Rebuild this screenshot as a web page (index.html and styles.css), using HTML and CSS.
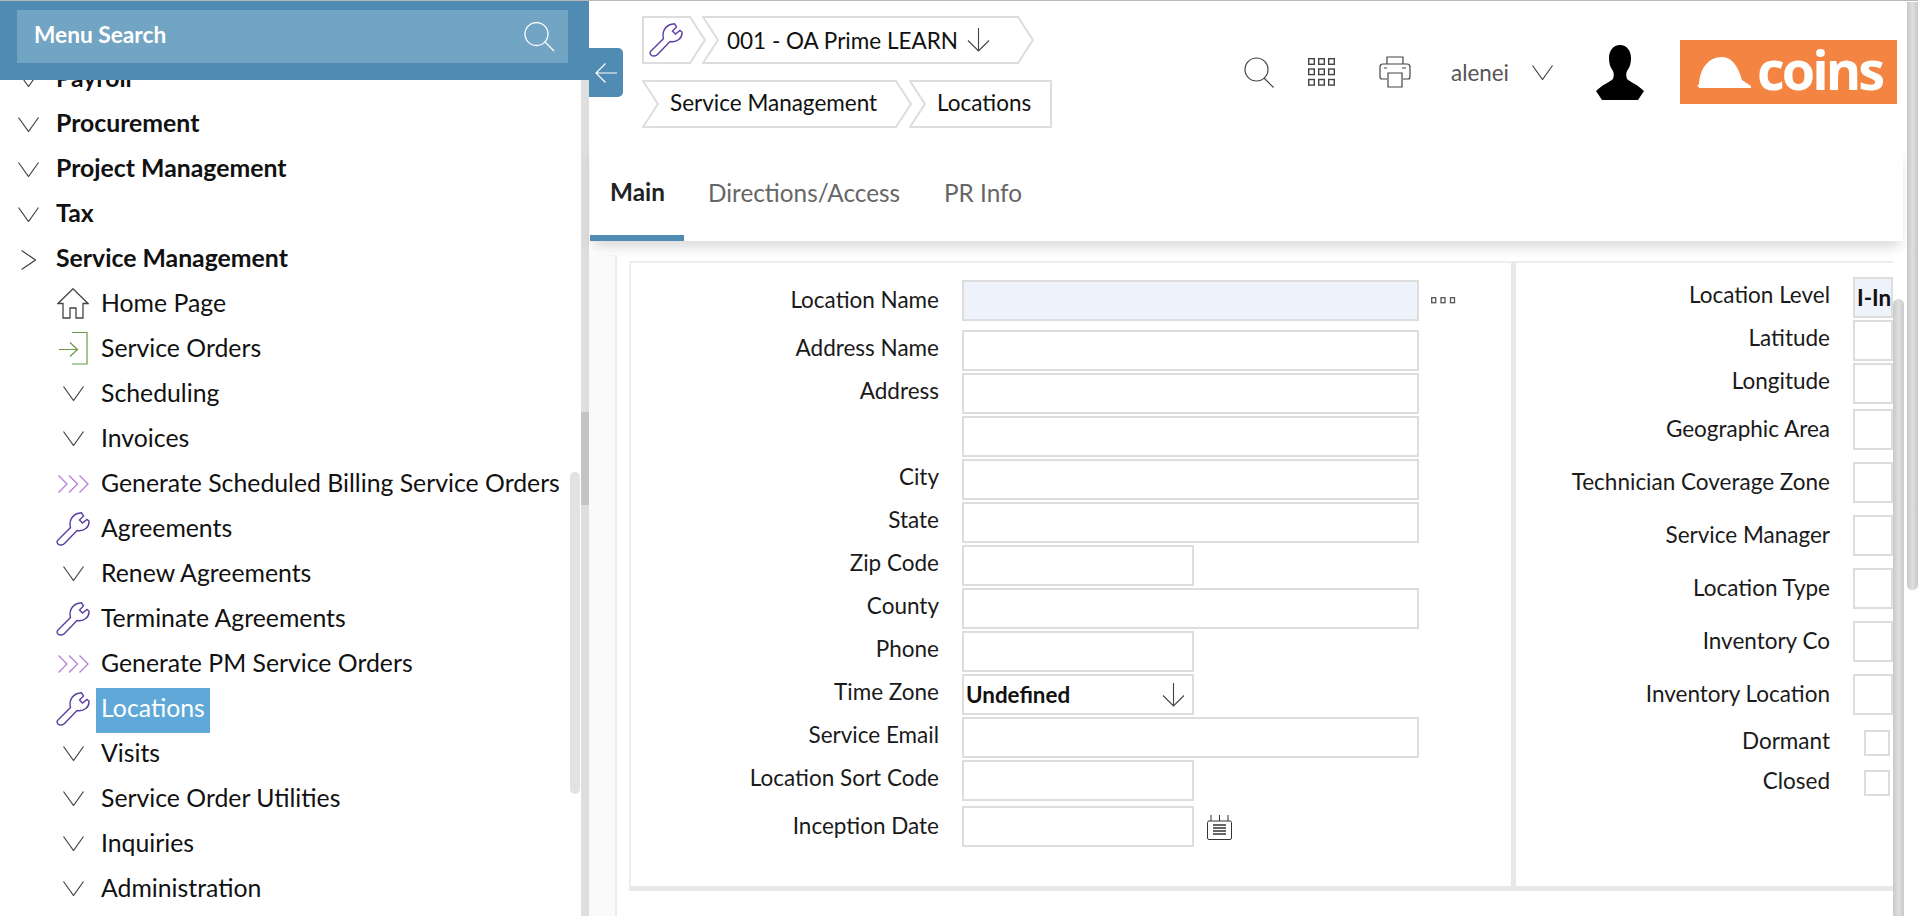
FILE: index.html
```html
<!DOCTYPE html>
<html lang="en">
<head>
    <meta charset="UTF-8">
    <title>Locations</title>
    <link rel="stylesheet" href="styles.css">
</head>
<body>

<svg class="icon-defs" width="0" height="0">
    <symbol id="i-down" viewBox="0 0 21 15"><path d="M.5.5 10.5 14.5 20.5.5" fill="none" stroke="#444" stroke-width="1.2"/></symbol>
    <symbol id="i-right" viewBox="0 0 15 20"><path d="M.5.5 14.5 10 .5 19.5" fill="none" stroke="#444" stroke-width="1.2"/></symbol>
    <symbol id="i-wrench" viewBox="0 0 34 34"><path d="M2.5 27.5 14.5 15.5C13 10 15 4 21.5 1.5L25.5.8 27.5 4 23.5 8 26.5 11 31 7.5 33 9C33.5 15 28 20 21 18.5L8.5 31.5C6.5 33.5 3.5 33.5 2 32 .5 30.5.8 29 2.5 27.5Z" fill="none" stroke="#5b3fa3" stroke-width="1.4"/></symbol>
    <symbol id="i-run" viewBox="0 0 31 18"><path d="M.5.5 9 9 .5 17.5M11 .5 19.5 9 11 17.5M21.500 .5 30 9 21.500 17.500" fill="none" stroke="#b67ddb" stroke-width="1.3"/></symbol>
    <symbol id="i-arrow-down" viewBox="0 0 23 24"><path d="M11.500 0V23M1 12.500 11.500 23 22 12.500" fill="none" stroke="#444" stroke-width="1.1"/></symbol>
</svg>

<div class="app">
    <aside class="sidebar">
        <div class="menu-search">
            <div class="search-box">
                <span class="search-txt">Menu Search</span>
                <svg width="31" height="30" viewBox="0 0 31 30"><circle cx="12.500" cy="12" r="11.500" fill="none" stroke="#fff" stroke-width="1.300"/><path d="M21 20 30 29" stroke="#fff" stroke-width="1.300"/></svg>
            </div>
        </div>
        <div class="menu-body">
            <ul class="menu">
                <li class="item top"><svg class="ico-down"><use href="#i-down"/></svg><span class="top-txt">Payroll</span></li>
                <li class="item top"><svg class="ico-down"><use href="#i-down"/></svg><span class="top-txt">Procurement</span></li>
                <li class="item top"><svg class="ico-down"><use href="#i-down"/></svg><span class="top-txt">Project Management</span></li>
                <li class="item top"><svg class="ico-down"><use href="#i-down"/></svg><span class="top-txt">Tax</span></li>
                <li class="item top"><svg class="ico-right"><use href="#i-right"/></svg><span class="top-txt">Service Management</span></li>
                <li class="item sub"><span class="ico"><svg width="32" height="31" viewBox="0 0 32 31"><path d="M16 .8 1 15.500H6V30H13V20H19V30H26V15.500H31Z" fill="none" stroke="#444" stroke-width="1.300"/></svg></span><span class="txt">Home Page</span></li>
                <li class="item sub"><span class="ico"><svg width="29" height="33" viewBox="0 0 29 33"><path d="M13 .5H28V32H13M0 17.500H18M11 10.500 18.500 17.500 11 24.500" fill="none" stroke="#6b9a45" stroke-width="1.200"/></svg></span><span class="txt">Service Orders</span></li>
                <li class="item sub"><span class="ico"><svg class="ico-down"><use href="#i-down"/></svg></span><span class="txt">Scheduling</span></li>
                <li class="item sub"><span class="ico"><svg class="ico-down"><use href="#i-down"/></svg></span><span class="txt">Invoices</span></li>
                <li class="item sub"><span class="ico"><svg class="ico-run"><use href="#i-run"/></svg></span><span class="txt">Generate Scheduled Billing Service Orders</span></li>
                <li class="item sub"><span class="ico"><svg class="ico-wrench"><use href="#i-wrench"/></svg></span><span class="txt">Agreements</span></li>
                <li class="item sub"><span class="ico"><svg class="ico-down"><use href="#i-down"/></svg></span><span class="txt">Renew Agreements</span></li>
                <li class="item sub"><span class="ico"><svg class="ico-wrench"><use href="#i-wrench"/></svg></span><span class="txt">Terminate Agreements</span></li>
                <li class="item sub"><span class="ico"><svg class="ico-run"><use href="#i-run"/></svg></span><span class="txt">Generate PM Service Orders</span></li>
                <li class="item sub"><span class="ico"><svg class="ico-wrench"><use href="#i-wrench"/></svg></span><span class="txt active">Locations</span></li>
                <li class="item sub"><span class="ico"><svg class="ico-down"><use href="#i-down"/></svg></span><span class="txt">Visits</span></li>
                <li class="item sub"><span class="ico"><svg class="ico-down"><use href="#i-down"/></svg></span><span class="txt">Service Order Utilities</span></li>
                <li class="item sub"><span class="ico"><svg class="ico-down"><use href="#i-down"/></svg></span><span class="txt">Inquiries</span></li>
                <li class="item sub"><span class="ico"><svg class="ico-down"><use href="#i-down"/></svg></span><span class="txt">Administration</span></li>
            </ul>
            <div class="menu-thumb"></div>
            <div class="menu-track"><div class="menu-track-thumb"></div></div>
        </div>
    </aside>

    <main class="main">
        <div class="main-col">
            <header class="topbar">
                <button class="back-btn"><svg width="22" height="20" viewBox="0 0 22 20"><path d="M22 10H1M10.500.5 1 10 10.500 19.500" fill="none" stroke="#fff" stroke-width="1.200"/></svg></button>
                <div class="crumbs">
                    <div class="crumb-row">
                        <div class="crumb crumb-tool">
                            <svg width="64" height="48"><path d="M1 1H48L63 24 48 47H1Z" fill="#fff" stroke="#ddd" stroke-width="2"/></svg>
                            <span class="crumb-txt"><svg class="ico-wrench"><use href="#i-wrench"/></svg></span>
                        </div>
                        <div class="crumb crumb-co">
                            <svg width="333" height="48"><path d="M1 1H316L331 24 316 47H1L16 24Z" fill="#fff" stroke="#ddd" stroke-width="2"/></svg>
                            <span class="crumb-txt">001 - OA Prime LEARN<svg class="crumb-arrow"><use href="#i-arrow-down"/></svg></span>
                        </div>
                    </div>
                    <div class="crumb-row row-two">
                        <div class="crumb crumb-module">
                            <svg width="271" height="48"><path d="M1 1H254L269 24 254 47H1L16 24Z" fill="#fff" stroke="#ddd" stroke-width="2"/></svg>
                            <span class="crumb-txt">Service Management</span>
                        </div>
                        <div class="crumb crumb-page">
                            <svg width="143" height="48"><path d="M1 1H142V47H1L16 24Z" fill="#fff" stroke="#ddd" stroke-width="2"/></svg>
                            <span class="crumb-txt">Locations</span>
                        </div>
                    </div>
                </div>
                <div class="tools">
                    <svg class="tool" width="30" height="31" viewBox="0 0 30 31"><circle cx="12.500" cy="12.500" r="11.500" fill="none" stroke="#444" stroke-width="1.200"/><path d="M20 21 29.500 30.500" stroke="#444" stroke-width="1.200"/></svg>
                    <svg class="tool t-grid" width="27" height="28" viewBox="0 0 27 28" fill="none" stroke="#444" stroke-width="1.400"><rect x=".7" y=".7" width="5.600" height="5.600"/><rect x="10.700" y=".7" width="5.600" height="5.600"/><rect x="20.700" y=".7" width="5.600" height="5.600"/><rect x=".7" y="11" width="5.600" height="5.600"/><rect x="10.700" y="11" width="5.600" height="5.600"/><rect x="20.700" y="11" width="5.600" height="5.600"/><rect x=".7" y="21.500" width="5.600" height="5.600"/><rect x="10.700" y="21.500" width="5.600" height="5.600"/><rect x="20.700" y="21.500" width="5.600" height="5.600"/></svg>
                    <svg class="tool t-print" width="32" height="32" viewBox="0 0 32 32" fill="none" stroke="#444" stroke-width="1.200"><path d="M8 8V1H24V8M8 23H3Q1 23 1 21V11Q1 8 4 8H28Q31 8 31 11V21Q31 23 29 23H24"/><path d="M9 17H23V31H9ZM5 12H8M23 12H27"/></svg>
                    <span class="user">alenei</span>
                    <svg class="ico-down t-user"><use href="#i-down"/></svg>
                    <svg class="t-avatar" width="48" height="55" viewBox="0 0 48 55"><path d="M24 0C17 0 13 6 13 13 13 18 14 22 17 26 18 28 18 31 17 34 12 38 6 40 0 46L6 55H42L48 46C42 40 36 38 31 34 30 31 30 28 31 26 34 22 35 18 35 13 35 6 31 0 24 0Z" fill="#000"/></svg>
                    <div class="logo">
                        <svg width="54" height="31" viewBox="0 0 54 31"><path d="M2 30C0 30 0 29 2 27 3 12 11 0 25 0 36 0 42 12 45 23L54 29V31H2Z" fill="#fff"/></svg>
                        <span class="logo-txt">coins</span>
                    </div>
                </div>
            </header>

            <nav class="tabs">
                <a class="tab active">Main</a>
                <a class="tab">Directions/Access</a>
                <a class="tab">PR Info</a>
            </nav>

            <div class="form-area">
                <div class="form-panel">
                    <section class="card card-left">
                        <div class="row row-first"><label class="lbl lbl-mid">Location Name</label><div class="inp wide filled"></div>
                            <svg class="dots" width="25" height="7" viewBox="0 0 25 7" fill="none" stroke="#555" stroke-width="1.300"><rect x=".7" y=".7" width="4" height="5"/><rect x="10" y=".7" width="4" height="5"/><rect x="19.500" y=".7" width="4" height="5"/></svg>
                        </div>
                        <div class="row"><label class="lbl">Address Name</label><div class="inp wide"></div></div>
                        <div class="row"><label class="lbl">Address</label><div class="inp wide"></div></div>
                        <div class="row"><label class="lbl"></label><div class="inp wide"></div></div>
                        <div class="row"><label class="lbl">City</label><div class="inp wide"></div></div>
                        <div class="row"><label class="lbl">State</label><div class="inp wide"></div></div>
                        <div class="row"><label class="lbl">Zip Code</label><div class="inp short"></div></div>
                        <div class="row"><label class="lbl">County</label><div class="inp wide"></div></div>
                        <div class="row"><label class="lbl">Phone</label><div class="inp short"></div></div>
                        <div class="row"><label class="lbl">Time Zone</label><div class="inp short select"><b>Undefined</b><svg class="sel-arrow"><use href="#i-arrow-down"/></svg></div></div>
                        <div class="row"><label class="lbl">Service Email</label><div class="inp wide"></div></div>
                        <div class="row"><label class="lbl">Location Sort Code</label><div class="inp short"></div></div>
                        <div class="row row-date"><label class="lbl lbl-mid">Inception Date</label><div class="inp short"></div>
                            <svg class="cal" width="25" height="25" viewBox="0 0 25 25" fill="none" stroke="#333" stroke-width="1"><path d="M4 0V6M12.500 0V6M21 0V6"/><path d="M2 6H23Q24.500 6 24.500 7.500V23Q24.500 24.500 23 24.500H2Q.5 24.500 .5 23V7.500Q.5 6 2 6Z"/><path d="M6 10H19M6 13H19M6 16H19M6 19H19" stroke-width="1.300"/></svg>
                        </div>
                    </section>
                    <section class="card card-right">
                        <div class="row"><label class="lbl">Location Level</label><div class="inp filled rest"><b>I-Individual</b></div></div>
                        <div class="row"><label class="lbl">Latitude</label><div class="inp rest"></div></div>
                        <div class="row"><label class="lbl">Longitude</label><div class="inp rest"></div></div>
                        <div class="row gap-s"><label class="lbl lbl-mid">Geographic Area</label><div class="inp rest"></div></div>
                        <div class="row gap-l"><label class="lbl lbl-mid">Technician Coverage Zone</label><div class="inp rest"></div></div>
                        <div class="row gap-l"><label class="lbl lbl-mid">Service Manager</label><div class="inp rest"></div></div>
                        <div class="row gap-l"><label class="lbl lbl-mid">Location Type</label><div class="inp rest"></div></div>
                        <div class="row gap-l"><label class="lbl lbl-mid">Inventory Co</label><div class="inp rest"></div></div>
                        <div class="row gap-l"><label class="lbl lbl-mid">Inventory Location</label><div class="inp rest"></div></div>
                        <div class="row check-row first-check"><label class="lbl">Dormant</label><div class="check"></div></div>
                        <div class="row check-row"><label class="lbl">Closed</label><div class="check"></div></div>
                    </section>
                </div>
                <div class="inner-scroll"></div>
            </div>
        </div>
        <div class="page-scroll"></div>
    </main>
</div>

</body>
</html>
```

FILE: styles.css
```css
body {
    margin: 0;
    height: 916px;
    overflow: hidden;
    font-family: Lato, "Open Sans", sans-serif;
    color: #111;
    background: #fff;
}
.icon-defs {
    display: block;
    height: 0;
}
.app {
    display: flex;
    height: 915px;
    border-top: 1px solid #b9b9b9;
    overflow: hidden;
}

/* left menu */
.sidebar {
    width: 589px;
    flex: none;
    display: flex;
    flex-direction: column;
    overflow: hidden;
}
.menu-search {
    position: relative;
    z-index: 2;
    height: 79px;
    padding: 9px 21px 0 17px;
    box-sizing: border-box;
    background: #4f8bb3;
}
.search-box {
    height: 53px;
    background: #72a4c3;
    display: flex;
    align-items: center;
    justify-content: space-between;
    padding: 0 13px 0 17px;
    color: #fff;
    font-size: 22.7px;
    font-weight: 700;
}
.search-txt {
    padding-bottom: 4px;
}
.menu-body {
    display: flex;
    flex: 1;
    margin-top: -24px;
    min-height: 0;
}
.menu {
    flex: 1;
    list-style: none;
    margin: 0;
    padding: 0;
}
.item {
    height: 45px;
    display: flex;
    align-items: center;
    font-size: 24.8px;
    white-space: nowrap;
}
.item.top {
    font-weight: 700;
}
.top-txt {
    margin-left: -1px;
    padding-bottom: 2px;
}
.ico-down {
    width: 21px;
    height: 15px;
    flex: none;
}
.ico-right {
    width: 15px;
    height: 20px;
    flex: none;
}
.ico-run {
    width: 31px;
    height: 18px;
}
.ico-wrench {
    width: 34px;
    height: 34px;
}
.item.top .ico-down {
    margin: 2px 18px 0 18px;
}
.item.top .ico-right {
    margin: 2px 21px 0 21px;
}
.item.sub .ico {
    width: 36px;
    margin-left: 55px;
    margin-right: 5px;
    display: flex;
    align-items: center;
    justify-content: center;
    flex: none;
}
.txt {
    padding: 0 5px;
    height: 45px;
    line-height: 43px;
    align-self: flex-start;
}
.txt.active {
    margin-top: 2px;
    line-height: 39px;
    background: #5fa8d8;
    color: #fff;
}
.menu-thumb {
    width: 10px;
    height: 322px;
    margin: 416px 1px 0 0;
    border-radius: 6px;
    background: #e2e2e2;
    flex: none;
}
.menu-track {
    width: 8px;
    flex: none;
    background: #dedede;
    padding-top: 356px;
    box-sizing: border-box;
}
.menu-track-thumb {
    height: 93px;
    background: #c4c4c4;
}

/* main area */
.main {
    flex: 1;
    display: flex;
    min-width: 0;
}
.main-col {
    width: 1316px;
    flex: none;
    display: flex;
    flex-direction: column;
}
.topbar {
    height: 144px;
    flex: none;
    display: flex;
    align-items: flex-start;
    box-sizing: border-box;
}
.back-btn {
    width: 34px;
    height: 49px;
    margin: 47px 0 0 0;
    padding: 0;
    border: none;
    border-radius: 0 5px 5px 0;
    background: #4f8bb3;
    display: flex;
    align-items: center;
    justify-content: center;
}
.crumbs {
    margin: 15px 0 0 19px;
    display: flex;
    flex-direction: column;
    gap: 16px;
    font-size: 22.5px;
}
.crumb-row {
    display: flex;
}
.crumb {
    display: grid;
    height: 48px;
}
.crumb > * {
    grid-area: 1 / 1;
}
.crumb-txt {
    display: flex;
    align-items: center;
}
.row-two .crumb-txt {
    padding-bottom: 3px;
}
.crumb-tool .crumb-txt {
    padding-left: 7px;
}
.crumb-co {
    margin-left: -4px;
}
.crumb-co .crumb-txt {
    padding-left: 25px;
}
.crumb-arrow {
    width: 23px;
    height: 24px;
    margin-left: 9px;
}
.crumb-module .crumb-txt {
    padding-left: 28px;
}
.crumb-page {
    margin-left: -4px;
}
.crumb-page .crumb-txt {
    padding-left: 28px;
}
.tools {
    display: flex;
    align-items: center;
    height: 64px;
    margin: 39px 0 0 auto;
    padding-right: 8px;
}
.t-grid {
    margin-left: 34px;
}
.t-print {
    margin-left: 44px;
}
.user {
    margin-left: 40px;
    font-size: 22.4px;
    color: #555;
}
.t-user {
    margin-left: 23px;
}
.t-avatar {
    margin-left: 43px;
}
.logo {
    margin-left: 36px;
    width: 217px;
    height: 64px;
    background: #f38441;
    display: flex;
    align-items: center;
    padding-left: 17px;
    box-sizing: border-box;
    color: #fff;
}
.logo-txt {
    margin: -7px 0 0 6px;
    font-family: "Open Sans", sans-serif;
    font-size: 54px;
    font-weight: 700;
    line-height: 64px;
    letter-spacing: -3px;
}

/* tabs */
.tabs {
    height: 96px;
    flex: none;
    margin: 0 2px 0 1px;
    display: flex;
    background: #fff;
    box-sizing: border-box;
    box-shadow: 0 9px 12px -3px rgba(0, 0, 0, .15);
    font-size: 24.3px;
    position: relative;
    z-index: 1;
}
.tab {
    display: flex;
    align-items: center;
    margin-right: 24px;
    padding-bottom: 2px;
    color: #666;
}
.tab + .tab {
    margin-right: 44px;
}
.tab.active {
    width: 94px;
    box-sizing: border-box;
    padding: 2px 0 0 20px;
    font-weight: 700;
    color: #222;
    border-bottom: 6px solid #4f8bb3;
}

/* form */
.form-area {
    flex: 1;
    display: flex;
    min-height: 0;
}
.form-panel {
    width: 1304px;
    flex: none;
    display: flex;
    align-items: flex-start;
    margin-top: 14px;
    padding: 6px 0 0 40px;
    box-sizing: border-box;
    background: linear-gradient(to right, #fafafa 26px, #ececec 26px, #ececec 28px, #fff 28px);
}
.card {
    box-sizing: border-box;
    height: 630px;
    border-top: 2px solid #eee;
    border-bottom: 5px solid #e8e8e8;
}
.card-left {
    width: 887px;
    border-left: 2px solid #eee;
    border-right: 5px solid #e8e8e8;
    padding-top: 17px;
}
.card-right {
    flex: 1;
    padding-top: 14px;
    overflow: hidden;
}
.row {
    display: flex;
    align-items: center;
    height: 41px;
    margin-bottom: 2px;
}
.lbl {
    flex: none;
    box-sizing: border-box;
    text-align: right;
    font-size: 22.5px;
    color: #1a1a1a;
    padding-bottom: 6px;
}
.lbl-mid {
    padding-bottom: 3px;
}
.card-left .lbl {
    width: 308px;
    margin-right: 23px;
}
.card-right .lbl {
    width: 314px;
    margin-right: 23px;
}
.inp {
    height: 41px;
    box-sizing: border-box;
    border: 2px solid #ddd;
    background: #fff;
    font-size: 22.4px;
}
.wide {
    width: 457px;
}
.short {
    width: 232px;
}
.filled {
    background: #eef2fa;
}
.rest {
    width: 60px;
    padding-left: 2px;
    line-height: 37px;
    white-space: nowrap;
    overflow: hidden;
}
.select {
    display: flex;
    align-items: center;
    justify-content: space-between;
    padding: 0 7px 0 2px;
}
.select b {
    font-weight: 700;
}
.sel-arrow {
    width: 23px;
    height: 24px;
}
.dots {
    margin-left: 12px;
}
.cal {
    margin: 2px 0 0 13px;
}
.row-first {
    margin-bottom: 9px;
}
.row-date {
    margin-top: 5px;
}
.gap-s {
    margin-top: 5px;
    margin-bottom: 0;
}
.gap-l {
    margin-top: 12px;
    margin-bottom: 0;
}
.check-row {
    height: 26px;
    margin: 14px 0 0 0;
}
.first-check {
    margin-top: 15px;
}
.check {
    width: 26px;
    height: 26px;
    box-sizing: border-box;
    border: 2px solid #ddd;
    margin-left: 11px;
}
.inner-scroll {
    width: 11px;
    margin-top: 58px;
    flex: none;
    border-radius: 6px 6px 0 0;
    background: linear-gradient(to right, #c9c9c9, #dedede 50%, #c9c9c9);
}
.page-scroll {
    width: 11px;
    height: 588px;
    margin: 1px 0 0 2px;
    flex: none;
    border-radius: 0 0 6px 6px;
    background: linear-gradient(to right, #c9c9c9, #dedede 50%, #c9c9c9);
}
```
